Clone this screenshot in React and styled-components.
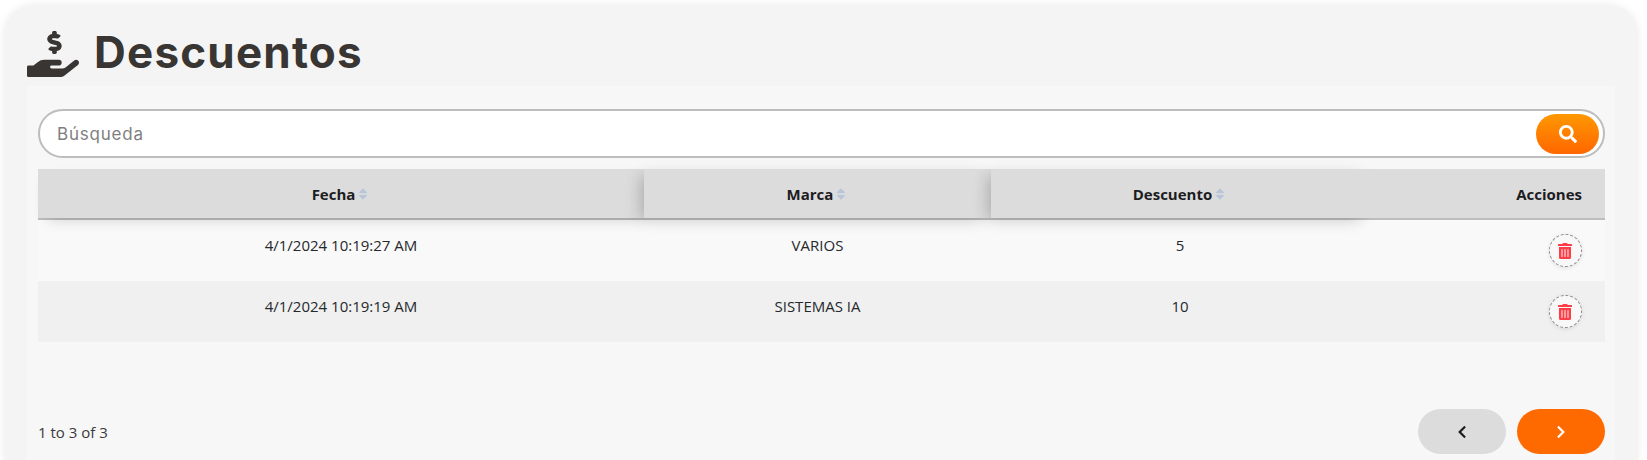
import styled, { createGlobalStyle } from "styled-components";
import { FaHandHoldingUsd, FaSearch, FaSort, FaTrashAlt, FaChevronLeft, FaChevronRight } from "react-icons/fa";

const GlobalStyle = createGlobalStyle`
  html, body {
    margin: 0;
    height: 460px;
    overflow: hidden;
    background: #fff;
  }
  * { box-sizing: border-box; }
`;

const Card = styled.div`
  margin: 5px 9px 0 4px;
  height: 455px;
  padding: 0 23px 0 23px;
  background: #f4f4f4;
  border-radius: 30px 30px 0 0;
  box-shadow: 0 0 10px rgba(0, 0, 0, 0.08);
  font-family: "Open Sans", sans-serif;
`;

const TitleRow = styled.div`
  height: 81px;
  display: flex;
  align-items: flex-end;
  gap: 15px;
  color: #383533;
  svg { margin-bottom: 6px; }
`;

const Title = styled.h1`
  margin: 0 0 4px 0;
  font-family: Inter, sans-serif;
  font-size: 44px;
  line-height: 60px;
  font-weight: 700;
  letter-spacing: 1.2px;
`;

const Panel = styled.div`
  height: 374px;
  padding: 23px 10px 0 11px;
  background: #f7f7f7;
  display: flex;
  flex-direction: column;
`;

const SearchBar = styled.div`
  height: 49px;
  padding: 3px 4px 3px 15px;
  display: flex;
  align-items: center;
  background: #fff;
  border: 2px solid #bdbdbd;
  border-radius: 25px;
`;

const SearchInput = styled.input`
  flex: 1;
  border: 0;
  outline: 0;
  background: transparent;
  font-family: Inter, sans-serif;
  font-size: 17px;
  letter-spacing: 0.8px;
  color: #333;
  &::placeholder { color: #808080; opacity: 1; }
`;

const SearchButton = styled.button`
  width: 63px;
  height: 40px;
  padding: 0;
  border: 0;
  border-radius: 20px;
  color: #fff;
  display: flex;
  align-items: center;
  justify-content: center;
  background: linear-gradient(#ff9800, #ff6600);
`;

const columns = "606px 347px 378px 1fr";

const HeadRow = styled.div`
  margin-top: 11px;
  height: 51px;
  display: grid;
  grid-template-columns: ${columns};
  border-bottom: 2px solid #bdbdbd;
`;

const HeadCell = styled.div`
  display: flex;
  align-items: center;
  justify-content: ${(p) => (p.$right ? "flex-end" : "center")};
  gap: 1px;
  padding-right: ${(p) => (p.$right ? "23px" : "0")};
  background: #dcdcdc;
  position: relative;
  z-index: ${(p) => p.$layer};
  box-shadow: ${(p) => {
    if (p.$right) return "none";
    if (p.$layer === 1) return "4px 6px 16px -6px rgba(0, 0, 0, 0.2)";
    return "-6px 4px 16px -3px rgba(0, 0, 0, 0.22)";
  }};
  font-size: 15px;
  font-weight: 700;
  color: #1c1c22;
  svg { color: #b9c6d9; }
`;

const Row = styled.div`
  height: 61px;
  display: grid;
  grid-template-columns: ${columns};
  background: ${(p) => (p.$alt ? "#f0f0f0" : "#f9f9f9")};
`;

const Cell = styled.div`
  padding-top: 15px;
  text-align: center;
  font-size: 15px;
  line-height: 20px;
  color: #26282c;
`;

const ActionCell = styled.div`
  padding: 14px 23px 0 0;
  display: flex;
  justify-content: flex-end;
  align-items: flex-start;
`;

const DeleteButton = styled.button`
  width: 33px;
  height: 33px;
  padding: 0 1px 0 0;
  display: flex;
  align-items: center;
  justify-content: center;
  color: #ff3d47;
  background: #f8f8f8;
  border: 1px dashed #8a8a8a;
  border-radius: 50%;
  box-shadow: 0 1px 4px rgba(0, 0, 0, 0.1);
`;

const Footer = styled.div`
  margin-top: auto;
  height: 51px;
  padding-bottom: 6px;
  display: flex;
  align-items: center;
  justify-content: space-between;
`;

const Count = styled.span`
  font-size: 15px;
  color: #3a3a3a;
`;

const Pager = styled.div`
  display: flex;
  gap: 11px;
`;

const PageButton = styled.button`
  width: 88px;
  height: 45px;
  padding: 0;
  border: 0;
  border-radius: 23px;
  display: flex;
  align-items: center;
  justify-content: center;
  color: ${(p) => (p.$active ? "#fff" : "#1c1c1c")};
  background: ${(p) => (p.$active ? "#ff6a00" : "#dcdcdc")};
`;

const rows = [
  { fecha: "4/1/2024 10:19:27 AM", marca: "VARIOS", descuento: "5" },
  { fecha: "4/1/2024 10:19:19 AM", marca: "SISTEMAS IA", descuento: "10" },
];

export default function App() {
  return (
    <Card>
      <GlobalStyle />
      <TitleRow>
        <FaHandHoldingUsd size={52} />
        <Title>Descuentos</Title>
      </TitleRow>
      <Panel>
        <SearchBar>
          <SearchInput placeholder="Búsqueda" />
          <SearchButton><FaSearch size={18} /></SearchButton>
        </SearchBar>
        <HeadRow>
          <HeadCell $layer={1}>Fecha <FaSort size={14} /></HeadCell>
          <HeadCell $layer={2}>Marca <FaSort size={14} /></HeadCell>
          <HeadCell $layer={3}>Descuento <FaSort size={14} /></HeadCell>
          <HeadCell $layer={4} $right>Acciones</HeadCell>
        </HeadRow>
        {rows.map((row, i) => (
          <Row key={row.fecha} $alt={i % 2 === 1}>
            <Cell>{row.fecha}</Cell>
            <Cell>{row.marca}</Cell>
            <Cell>{row.descuento}</Cell>
            <ActionCell>
              <DeleteButton><FaTrashAlt size={16} /></DeleteButton>
            </ActionCell>
          </Row>
        ))}
        <Footer>
          <Count>1 to 3 of 3</Count>
          <Pager>
            <PageButton><FaChevronLeft size={14} /></PageButton>
            <PageButton $active><FaChevronRight size={14} /></PageButton>
          </Pager>
        </Footer>
      </Panel>
    </Card>
  );
}
